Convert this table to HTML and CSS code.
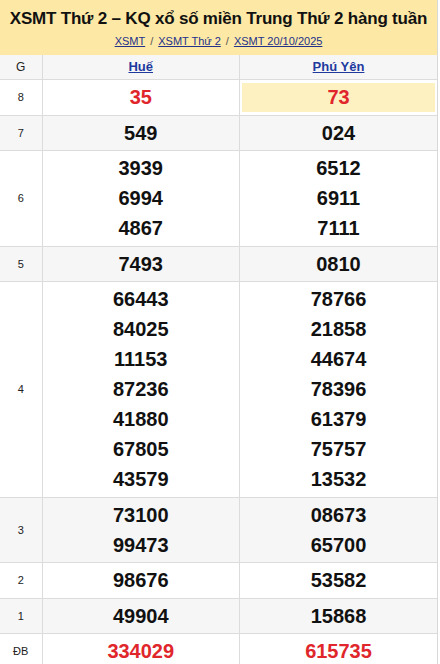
FILE: index.html
```html
<!DOCTYPE html>
<html lang="vi">
<head>
<meta charset="utf-8">
<title>XSMT Thứ 2</title>
<link rel="stylesheet" href="styles.css">
</head>
<body>
<div class="wrap">
  <div class="head">
    <h1 class="title">XSMT Thứ 2 – KQ xổ số miền Trung Thứ 2 hàng tuần</h1>
    <div class="crumbs"><a href="#">XSMT</a><span class="sep">/</span><a href="#">XSMT Thứ 2</a><span class="sep">/</span><a href="#">XSMT 20/10/2025</a></div>
  </div>
  <table class="kq">
    <colgroup><col class="c-g"><col class="c-p"><col class="c-p"></colgroup>
    <tr class="hdr"><td class="g">G</td><td class="prov"><a href="#">Huế</a></td><td class="prov"><a href="#">Phú Yên</a></td></tr>
    <tr><td class="g">8</td><td class="n red">35</td><td class="n red"><div class="hl">73</div></td></tr>
    <tr class="alt"><td class="g">7</td><td class="n">549</td><td class="n">024</td></tr>
    <tr><td class="g">6</td><td class="n">3939<br>6994<br>4867</td><td class="n">6512<br>6911<br>7111</td></tr>
    <tr class="alt"><td class="g">5</td><td class="n">7493</td><td class="n">0810</td></tr>
    <tr><td class="g">4</td><td class="n">66443<br>84025<br>11153<br>87236<br>41880<br>67805<br>43579</td><td class="n">78766<br>21858<br>44674<br>78396<br>61379<br>75757<br>13532</td></tr>
    <tr class="alt"><td class="g">3</td><td class="n">73100<br>99473</td><td class="n">08673<br>65700</td></tr>
    <tr><td class="g">2</td><td class="n">98676</td><td class="n">53582</td></tr>
    <tr class="alt"><td class="g">1</td><td class="n">49904</td><td class="n">15868</td></tr>
    <tr><td class="g">ĐB</td><td class="n red big">334029</td><td class="n red big">615735</td></tr>
  </table>
</div>
</body>
</html>
```

FILE: styles.css
```css
html, body {
  margin: 0;
  padding: 0;
  background: #fff;
}
body {
  font-family: "Liberation Sans", Arial, sans-serif;
  color: #111;
}
.wrap {
  width: 437px;
  border-right: 1px solid #d8d8d8;
  overflow: hidden;
}
.head {
  background: #fde8a5;
  height: 55px;
  box-sizing: border-box;
  padding-top: 8px;
  text-align: center;
}
.title {
  margin: 0;
  font-size: 17px;
  letter-spacing: -0.2px;
  line-height: 22px;
  font-weight: bold;
  color: #111;
  white-space: nowrap;
}
.crumbs {
  margin-top: 3px;
  font-size: 11px;
  line-height: 16px;
  color: #555;
  white-space: nowrap;
}
.crumbs a {
  color: #23318a;
  text-decoration: underline;
}
.crumbs .sep {
  margin: 0 5px;
  color: #555;
}
.kq {
  width: 437px;
  border-collapse: collapse;
  table-layout: fixed;
}
.c-g { width: 42px; }
.kq td {
  border-bottom: 1px solid #dcdcdc;
  border-right: 1px solid #dcdcdc;
  padding: 2.25px 2px;
  text-align: center;
  vertical-align: middle;
}
.kq td:last-child { border-right: none; }
.hdr td {
  background: #f6f6f6;
  height: 19px;
  padding: 2px;
  font-size: 12px;
  line-height: 19px;
}
.hdr .prov a {
  font-size: 13px;
  font-weight: bold;
  color: #1e3a9e;
  text-decoration: underline;
}
.alt td { background: #f6f6f6; }
.g {
  font-size: 11px;
  color: #222;
}
.hdr .g { font-size: 12px; }
.n {
  font-size: 20px;
  line-height: 30px;
  font-weight: bold;
  color: #111;
}
.n.red { color: #e0262b; }
.n.big { font-size: 20px; }
.hl {
  background: #fdf1c2;
  line-height: 29px;
  margin: 1px 0 0;
}
```
